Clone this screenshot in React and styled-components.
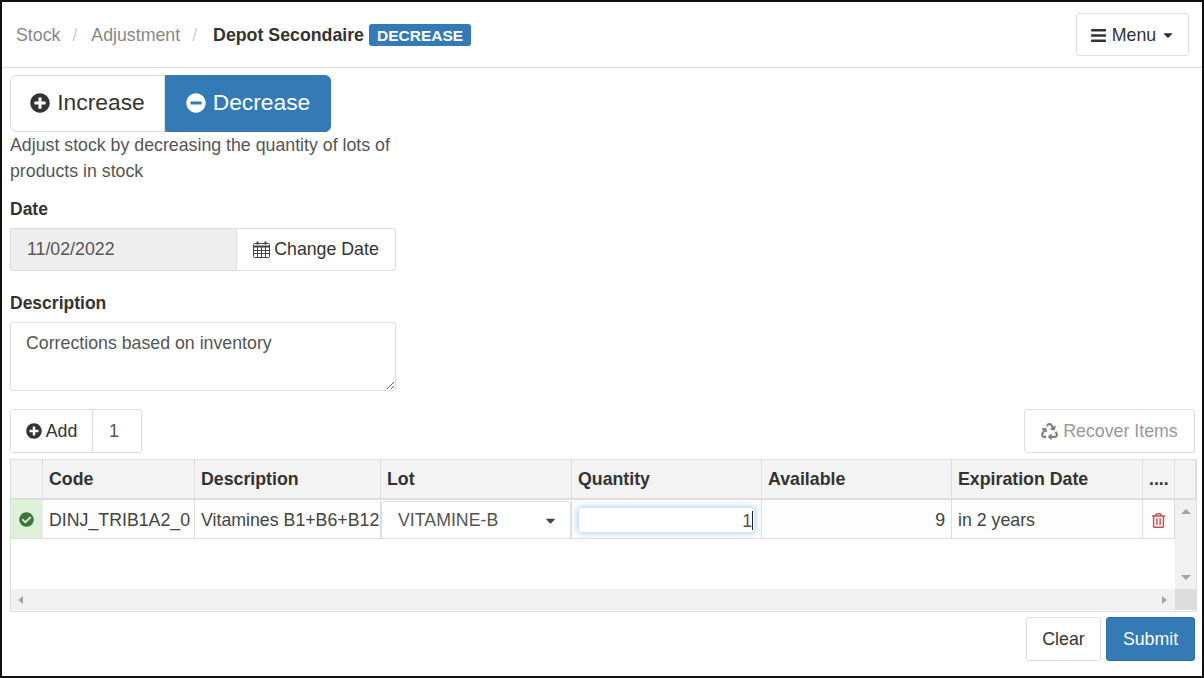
import React from 'react'
import styled, { createGlobalStyle } from 'styled-components'
import {
  FaBars,
  FaCaretDown,
  FaCheckCircle,
  FaMinusCircle,
  FaPlusCircle,
  FaRecycle,
  FaRegTrashAlt,
} from 'react-icons/fa'

const GlobalStyle = createGlobalStyle`
  html, body {
    margin: 0;
    padding: 0;
    background: #fff;
  }
  * {
    box-sizing: border-box;
  }
  body {
    font-family: "Liberation Sans", Arial, sans-serif;
    font-size: 17.75px;
    color: #333;
  }
`

const Frame = styled.div`
  width: 1204px;
  height: 678px;
  border: 2px solid #111;
  overflow: hidden;
  background: #fff;
`

const Header = styled.header`
  height: 66px;
  display: flex;
  align-items: center;
  justify-content: space-between;
  padding: 0 13px 0 14px;
  border-bottom: 1px solid #ddd;
`

const Crumbs = styled.div`
  display: flex;
  align-items: center;
  margin-top: 1px;
`

const Crumb = styled.span`
  color: #888;
`

const Slash = styled.span`
  color: #ccc;
  margin: 0 14px 0 12px;
`

const Current = styled.strong`
  margin-left: 2px;
`

const Badge = styled.span`
  margin-left: 5px;
  padding: 3px 8px 2px;
  background: #337ab7;
  color: #fff;
  border-radius: 3px;
  font-size: 15.5px;
  font-weight: 700;
  line-height: 17px;
`

const Button = styled.button`
  display: inline-flex;
  align-items: center;
  justify-content: center;
  gap: ${(p) => p.$gap || 4}px;
  height: ${(p) => p.$height || 44}px;
  width: ${(p) => p.$width}px;
  padding: 1px 0 0;
  border: 1px solid ${(p) => (p.$primary ? '#2e6da4' : '#ddd')};
  border-radius: 3px;
  background: ${(p) => (p.$primary ? '#337ab7' : '#fff')};
  color: ${(p) => (p.$primary ? '#fff' : p.$muted ? '#999' : '#333')};
  font: inherit;
`

const Content = styled.main`
  padding: 7px 7px 0 8px;
`

const Toggle = styled.div`
  display: flex;
  width: 321px;
  height: 57px;
`

const ToggleButton = styled.button`
  display: flex;
  align-items: center;
  justify-content: center;
  gap: 7px;
  width: ${(p) => p.$width}px;
  padding: 0 0 2px;
  border: 1px solid ${(p) => (p.$active ? '#337ab7' : '#ddd')};
  border-radius: ${(p) => (p.$active ? '0 6px 6px 0' : '6px 0 0 6px')};
  background: ${(p) => (p.$active ? '#337ab7' : '#fff')};
  color: ${(p) => (p.$active ? '#fff' : '#333')};
  font: inherit;
  font-size: 22.8px;
`

const Help = styled.p`
  width: 400px;
  margin: 0;
  color: #555;
  line-height: 26px;
`

const Field = styled.div`
  width: 386px;
  margin-top: ${(p) => p.$top}px;
`

const Label = styled.label`
  display: block;
  margin-bottom: 9px;
  font-weight: 700;
  font-size: 17.5px;
  line-height: 19px;
`

const DateGroup = styled.div`
  display: flex;
  height: 43px;
`

const DateInput = styled.input`
  flex: 1;
  min-width: 0;
  padding: 0 16px;
  border: 1px solid #ddd;
  border-right: 0;
  border-radius: 3px 0 0 3px;
  background: #eee;
  color: #555;
  font: inherit;
`

const DateButton = styled.button`
  display: flex;
  align-items: center;
  justify-content: center;
  gap: 4px;
  width: 160px;
  padding: 0;
  border: 1px solid #ddd;
  border-radius: 0 3px 3px 0;
  background: #fff;
  color: #333;
  font: inherit;
`

const TextArea = styled.textarea`
  display: block;
  width: 386px;
  height: 69px;
  padding: 9px 15px;
  border: 1px solid #ddd;
  border-radius: 3px;
  color: #555;
  font: inherit;
  line-height: 22px;
`

const Toolbar = styled.div`
  display: flex;
  align-items: center;
  justify-content: space-between;
  margin-top: 18px;
`

const AddGroup = styled.div`
  display: flex;
  width: 132px;
  height: 44px;
  border: 1px solid #ddd;
  border-radius: 3px;
`

const AddButton = styled.button`
  display: flex;
  align-items: center;
  justify-content: center;
  gap: 4px;
  width: 82px;
  padding: 0;
  border: 0;
  border-right: 1px solid #ddd;
  background: #fff;
  color: #333;
  font: inherit;
`

const AddCount = styled.input`
  width: 48px;
  border: 0;
  padding: 0 0 0 16px;
  background: transparent;
  color: #555;
  font: inherit;
`

const GridBox = styled.div`
  width: 1187px;
  height: 153px;
  margin-top: 6px;
  padding-bottom: 1px;
  border: 1px solid #ddd;
  display: flex;
  flex-direction: column;
`

const columns = '32px 152px 186px 191px 190px 190px 191px 32px 21px'

const HeaderRow = styled.div`
  display: grid;
  grid-template-columns: ${columns};
  height: 40px;
  background: #f3f3f3;
  border-bottom: 2px solid #ddd;
`

const HeaderCell = styled.div`
  display: flex;
  align-items: center;
  padding: 0 0 0 6px;
  border-right: 1px solid #ddd;
  font-weight: 700;
  white-space: nowrap;
  overflow: hidden;
`

const GridMiddle = styled.div`
  flex: 1;
  display: flex;
  min-height: 0;
`

const GridRows = styled.div`
  flex: 1;
`

const DataRow = styled.div`
  display: grid;
  grid-template-columns: 32px 152px 186px 191px 190px 190px 191px 32px;
  height: 39px;
  background: #fdfdfd;
  border-bottom: 1px solid #ddd;
`

const Cell = styled.div`
  display: flex;
  align-items: center;
  justify-content: ${(p) => p.$justify || 'flex-start'};
  padding: 2px 6px 0;
  border-right: 1px solid #ddd;
  color: #444;
  white-space: nowrap;
  overflow: hidden;
`

const StatusCell = styled(Cell)`
  justify-content: center;
  padding: 0 1px 0 0;
  background: #dff0d8;
  border-right: 1px solid #eee;
  color: #3c763d;
`

const LotCell = styled(Cell)`
  padding: 1px 0 0;
`

const LotSelect = styled.div`
  width: 191px;
  height: 38px;
  display: flex;
  align-items: center;
  justify-content: space-between;
  padding: 2px 12px 0 16px;
  background: #fff;
  border: 1px solid #ddd;
  border-radius: 3px;
  color: #555;
`

const QuantityInput = styled.div`
  position: relative;
  flex: 1;
  height: 26px;
  line-height: 26px;
  padding-right: 2px;
  text-align: right;
  background: #fff;
  border: 1px solid #d4e3f0;
  border-radius: 3px;
  box-shadow: 0 0 6px rgba(102, 175, 233, 0.6);
  color: #555;

  &::after {
    content: '';
    position: absolute;
    top: 3px;
    right: 1px;
    width: 1px;
    height: 19px;
    background: #222;
  }
`

const VerticalBar = styled.div`
  width: 21px;
  display: flex;
  flex-direction: column;
  align-items: center;
  justify-content: space-between;
  padding: 9px 0;
  background: #f1f1f1;
`

const HorizontalBar = styled.div`
  height: 21px;
  display: flex;
  align-items: center;
  justify-content: space-between;
  padding-left: 7px;
  background: #f1f1f1;
`

const Corner = styled.div`
  width: 21px;
  height: 21px;
  margin-left: 8px;
  background: #dcdcdc;
`

const BarEnd = styled.div`
  display: flex;
  align-items: center;
`

const Arrow = styled.span`
  display: block;
  width: 0;
  height: 0;
  border: ${(p) => (p.$dir === 'up' || p.$dir === 'down' ? '5px' : '4px')} solid transparent;
  ${(p) => (p.$dir === 'up' ? 'border-top: 0; border-bottom: 5px solid #a3a3a3;' : '')}
  ${(p) => (p.$dir === 'down' ? 'border-bottom: 0; border-top: 5px solid #a3a3a3;' : '')}
  ${(p) => (p.$dir === 'left' ? 'border-left: 0; border-right: 5px solid #a3a3a3;' : '')}
  ${(p) => (p.$dir === 'right' ? 'border-right: 0; border-left: 5px solid #a3a3a3;' : '')}
`

const Footer = styled.div`
  display: flex;
  justify-content: flex-end;
  gap: 5px;
  margin-top: 5px;
`

const CalendarIcon = () => (
  <svg width="17" height="17" viewBox="0 0 17 17" fill="none" stroke="#444" strokeWidth="1">
    <rect x="0.5" y="2.5" width="16" height="14" rx="1" />
    <path d="M0.5 5.5h16" strokeWidth="2" />
    <path d="M0.5 9.5h16M0.5 12.5h16M4.5 6v10M8.5 6v10M12.5 6v10" />
    <path d="M4.5 0.5v3M12.5 0.5v3" strokeWidth="2" />
  </svg>
)

const headers = ['', 'Code', 'Description', 'Lot', 'Quantity', 'Available', 'Expiration Date', '....', '']

export default function App() {
  return (
    <Frame>
      <GlobalStyle />
      <Header>
        <Crumbs>
          <Crumb>Stock</Crumb>
          <Slash>/</Slash>
          <Crumb>Adjustment</Crumb>
          <Slash>/</Slash>
          <Current>Depot Secondaire</Current>
          <Badge>DECREASE</Badge>
        </Crumbs>
        <Button $width={113} $height={43} $gap={5}>
          <FaBars size={17} /> Menu <FaCaretDown size={14} />
        </Button>
      </Header>
      <Content>
        <Toggle>
          <ToggleButton $width={155}>
            <FaPlusCircle size={20} /> Increase
          </ToggleButton>
          <ToggleButton $width={166} $active>
            <FaMinusCircle size={20} /> Decrease
          </ToggleButton>
        </Toggle>
        <Help>Adjust stock by decreasing the quantity of lots of products in stock</Help>
        <Field $top={16}>
          <Label>Date</Label>
          <DateGroup>
            <DateInput readOnly value="11/02/2022" />
            <DateButton>
              <CalendarIcon /> Change Date
            </DateButton>
          </DateGroup>
        </Field>
        <Field $top={23}>
          <Label>Description</Label>
          <TextArea readOnly value="Corrections based on inventory" />
        </Field>
        <Toolbar>
          <AddGroup>
            <AddButton>
              <FaPlusCircle size={16} /> Add
            </AddButton>
            <AddCount readOnly value="1" />
          </AddGroup>
          <Button $width={171} $muted $gap={5}>
            <FaRecycle size={17} color="#808080" /> Recover Items
          </Button>
        </Toolbar>
        <GridBox>
          <HeaderRow>
            {headers.map((title, i) => (
              <HeaderCell key={i}>{title}</HeaderCell>
            ))}
          </HeaderRow>
          <GridMiddle>
            <GridRows>
              <DataRow>
                <StatusCell>
                  <FaCheckCircle size={15} />
                </StatusCell>
                <Cell>DINJ_TRIB1A2_0</Cell>
                <Cell>Vitamines B1+B6+B12</Cell>
                <LotCell>
                  <LotSelect>
                    VITAMINE-B <FaCaretDown size={15} color="#444" />
                  </LotSelect>
                </LotCell>
                <Cell>
                  <QuantityInput>1</QuantityInput>
                </Cell>
                <Cell $justify="flex-end">9</Cell>
                <Cell>in 2 years</Cell>
                <Cell $justify="center">
                  <FaRegTrashAlt size={15} color="#c0504d" />
                </Cell>
              </DataRow>
            </GridRows>
            <VerticalBar>
              <Arrow $dir="up" />
              <Arrow $dir="down" />
            </VerticalBar>
          </GridMiddle>
          <HorizontalBar>
            <Arrow $dir="left" />
            <BarEnd>
              <Arrow $dir="right" />
              <Corner />
            </BarEnd>
          </HorizontalBar>
        </GridBox>
        <Footer>
          <Button $width={75}>Clear</Button>
          <Button $width={89} $primary>
            Submit
          </Button>
        </Footer>
      </Content>
    </Frame>
  )
}
